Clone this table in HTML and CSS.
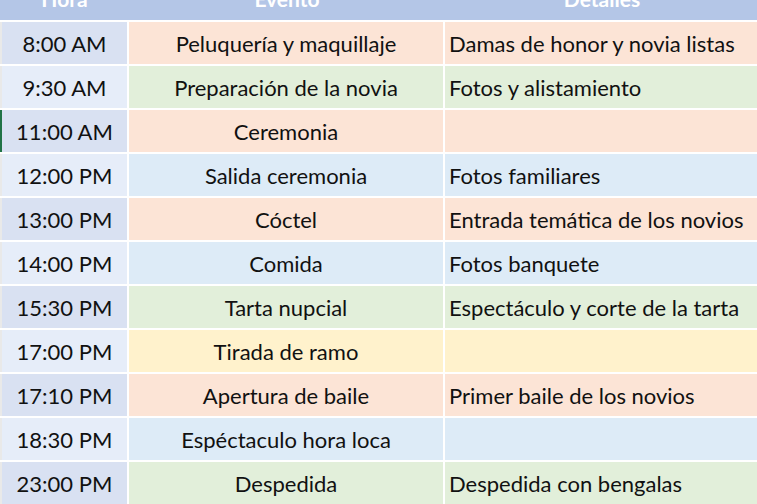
FILE: index.html
```html
<!DOCTYPE html>
<html lang="es">
<head>
<meta charset="utf-8">
<title>Itinerario de boda</title>
<link rel="stylesheet" href="styles.css">
</head>
<body>
<div class="sheet">
  <div class="hd"><span>Hora</span></div>
  <div class="hd"><span>Evento</span></div>
  <div class="hd"><span>Detalles</span></div>

  <div class="t dark">8:00 AM</div><div class="e peach">Peluquería y maquillaje</div><div class="d peach">Damas de honor y novia listas</div>
  <div class="t light">9:30 AM</div><div class="e green">Preparación de la novia</div><div class="d green">Fotos y alistamiento</div>
  <div class="t dark sel">11:00 AM</div><div class="e peach">Ceremonia</div><div class="d peach"></div>
  <div class="t light">12:00 PM</div><div class="e blue">Salida ceremonia</div><div class="d blue">Fotos familiares</div>
  <div class="t dark">13:00 PM</div><div class="e peach">Cóctel</div><div class="d peach">Entrada temática de los novios</div>
  <div class="t light">14:00 PM</div><div class="e blue">Comida</div><div class="d blue">Fotos banquete</div>
  <div class="t dark">15:30 PM</div><div class="e green">Tarta nupcial</div><div class="d green">Espectáculo y corte de la tarta</div>
  <div class="t light">17:00 PM</div><div class="e yellow">Tirada de ramo</div><div class="d yellow"></div>
  <div class="t dark">17:10 PM</div><div class="e peach">Apertura de baile</div><div class="d peach">Primer baile de los novios</div>
  <div class="t light">18:30 PM</div><div class="e blue">Espéctaculo hora loca</div><div class="d blue"></div>
  <div class="t dark">23:00 PM</div><div class="e green">Despedida</div><div class="d green">Despedida con bengalas</div>
</div>
</body>
</html>
```

FILE: styles.css
```css
html, body {
  margin: 0;
  padding: 0;
  background: #ffffff;
}

body {
  width: 757px;
  height: 504px;
  overflow: hidden;
  font-family: Lato, "Open Sans", sans-serif;
  color: #111111;
}

.sheet {
  display: grid;
  grid-template-columns: 127px 314px 312px;
  grid-template-rows: 20px repeat(11, 42px);
  column-gap: 2px;
  row-gap: 2px;
}

.hd {
  background: #b4c6e7;
  color: #ffffff;
  font-weight: 700;
  font-size: 21px;
  text-align: center;
  overflow: hidden;
  margin-right: -2px;
}

.hd span {
  display: block;
  line-height: 20px;
  margin-top: -11px;
}

.hd:last-of-type { margin-right: 0; }

.t, .e, .d {
  display: flex;
  align-items: center;
  font-size: 22px;
  white-space: nowrap;
}

.t {
  justify-content: center;
  border-left: 2px solid #e9e9e9;
}

.t.sel { border-left-color: #217346; }

.e { justify-content: center; }

.d {
  justify-content: flex-start;
  padding-left: 4px;
}

.dark { background: #d9e1f2; }
.light { background: #e6edf9; }

.peach { background: #fce4d6; }
.green { background: #e2efda; }
.blue { background: #ddebf7; }
.yellow { background: #fff2cc; }
```
